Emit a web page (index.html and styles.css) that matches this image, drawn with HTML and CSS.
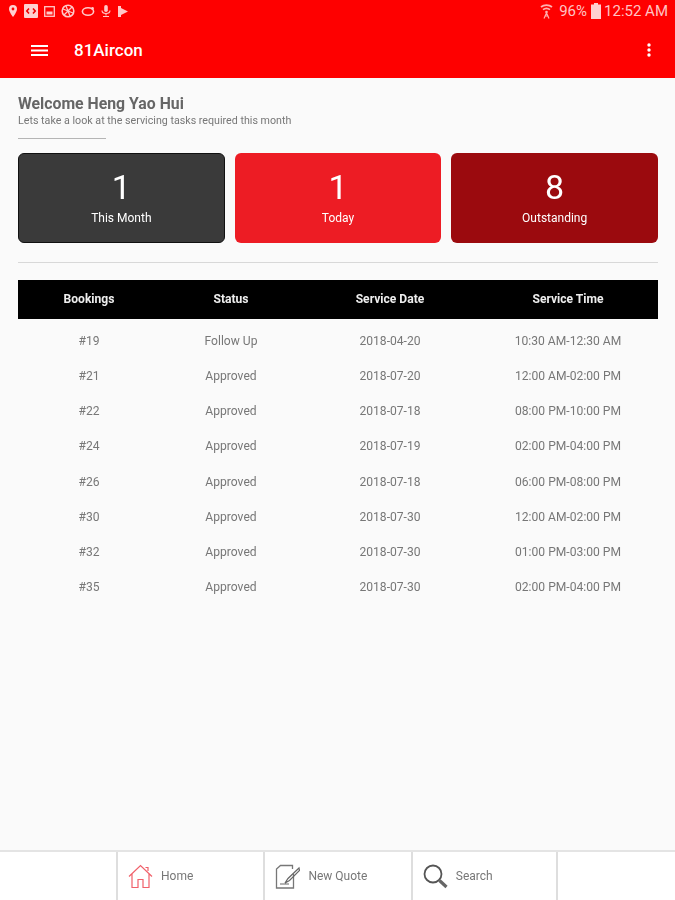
FILE: index.html
```html
<!DOCTYPE html>
<html lang="en">
<head>
<meta charset="utf-8">
<title>81Aircon</title>
<link rel="stylesheet" href="styles.css">
</head>
<body>
<div class="page">
  <header class="appbar">
    <div class="statusbar">
      <div class="status-icons">
        <svg class="si" width="10" height="12" viewBox="0 0 10 12"><path fill="#ffd0d0" fill-rule="evenodd" d="M5 0a4 4 0 0 1 4 4c0 3-4 8-4 8S1 7 1 4a4 4 0 0 1 4-4zm0 2.600a1.400 1.400 0 1 0 0 2.800 1.400 1.400 0 0 0 0-2.800z"/></svg>
        <svg class="si" width="14" height="14" viewBox="0 0 14 14"><rect width="14" height="14" rx="1" fill="#ffd0d0"/><path d="M5 4.500 2.800 7 5 9.500M9 4.500 11.200 7 9 9.500" fill="none" stroke="#e00" stroke-width="1.600"/></svg>
        <svg class="si" width="11" height="11" viewBox="0 0 11 11"><rect x=".7" y=".7" width="9.600" height="9.600" fill="none" stroke="#ffc8c8" stroke-width="1.300"/><rect x="2.500" y="5.500" width="6" height="3" fill="#ffc8c8"/></svg>
        <svg class="si" width="14" height="14" viewBox="0 0 14 14"><circle cx="7" cy="7" r="5.800" fill="none" stroke="#ffc8c8" stroke-width="1.600"/><path d="M2 5l10 4M5 2l4 10M11 3 3 11" stroke="#ffc8c8" stroke-width="1.300"/></svg>
        <svg class="si" width="14" height="11" viewBox="0 0 14 11"><ellipse cx="7" cy="5.500" rx="5.600" ry="3.800" fill="none" stroke="#ffc8c8" stroke-width="1.600"/><circle cx="11.500" cy="2.500" r="1.400" fill="#ffc8c8"/></svg>
        <svg class="si" width="10" height="12" viewBox="0 0 10 12"><rect x="3.200" y="0" width="3.600" height="7" rx="1.800" fill="#ffc8c8"/><path d="M1 5.500c0 4 8 4 8 0M5 9v1.500M2 11.500h6" fill="none" stroke="#ffc8c8" stroke-width="1.100"/></svg>
        <svg class="si" width="11" height="11" viewBox="0 0 11 11"><path fill="#ffc8c8" d="M1 0h3v2l7 3.500-7 3.500v2H1z"/></svg>
      </div>
      <div class="status-right">
        <svg width="13" height="15" viewBox="0 0 13 15"><path d="M1 3c3-2.600 8-2.600 11 0M3 5.600c2-1.500 5-1.500 7 0" fill="none" stroke="#ffb0b0" stroke-width="1.700"/><circle cx="6.500" cy="8" r="1.300" fill="#ffb0b0"/><path d="M6.500 9 4 14.500M6.500 9 9 14.500M4.500 12h4" fill="none" stroke="#ffb0b0" stroke-width="1.200"/></svg>
        <span class="status-text pct">96%</span>
        <svg width="10" height="16" viewBox="0 0 10 16"><path fill="#ffd0d0" d="M3 0h4v1.500h3V16H0V1.500h3z"/></svg>
        <span class="status-text">12:52 AM</span>
      </div>
    </div>
    <div class="toolbar">
      <div class="toolbar-left">
        <svg class="menu-icon" width="17" height="11" viewBox="0 0 17 11"><path d="M0 1h17M0 5.500h17M0 10h17" stroke="#fff" stroke-width="2"/></svg>
        <span class="app-title">81Aircon</span>
      </div>
      <svg class="more-icon" width="4" height="14" viewBox="0 0 4 14"><circle cx="2" cy="2" r="1.700" fill="#fff"/><circle cx="2" cy="7" r="1.700" fill="#fff"/><circle cx="2" cy="12" r="1.700" fill="#fff"/></svg>
    </div>
  </header>

  <main class="content">
    <h1 class="welcome">Welcome Heng Yao Hui</h1>
    <p class="subtitle">Lets take a look at the servicing tasks required this month</p>
    <div class="short-rule"></div>

    <section class="cards">
      <div class="card card-dark"><div class="card-num">1</div><div class="card-label">This Month</div></div>
      <div class="card card-red"><div class="card-num">1</div><div class="card-label">Today</div></div>
      <div class="card card-maroon"><div class="card-num">8</div><div class="card-label">Outstanding</div></div>
    </section>

    <div class="long-rule"></div>

    <div class="table">
      <div class="row head"><div>Bookings</div><div>Status</div><div>Service Date</div><div>Service Time</div></div>
      <div class="row"><div>#19</div><div>Follow Up</div><div>2018-04-20</div><div>10:30 AM-12:30 AM</div></div>
      <div class="row"><div>#21</div><div>Approved</div><div>2018-07-20</div><div>12:00 AM-02:00 PM</div></div>
      <div class="row"><div>#22</div><div>Approved</div><div>2018-07-18</div><div>08:00 PM-10:00 PM</div></div>
      <div class="row"><div>#24</div><div>Approved</div><div>2018-07-19</div><div>02:00 PM-04:00 PM</div></div>
      <div class="row"><div>#26</div><div>Approved</div><div>2018-07-18</div><div>06:00 PM-08:00 PM</div></div>
      <div class="row"><div>#30</div><div>Approved</div><div>2018-07-30</div><div>12:00 AM-02:00 PM</div></div>
      <div class="row"><div>#32</div><div>Approved</div><div>2018-07-30</div><div>01:00 PM-03:00 PM</div></div>
      <div class="row"><div>#35</div><div>Approved</div><div>2018-07-30</div><div>02:00 PM-04:00 PM</div></div>
    </div>
  </main>

  <nav class="tabbar">
    <div class="tab">
      <svg width="25" height="25" viewBox="0 0 25 25"><path d="M1 12.500 12.500 1.500 24 12.500M4 10v13.500h6V15.500h5v8h6V10M17.500 3.500h2.500V7" fill="none" stroke="#f0606a" stroke-width="1.200"/></svg>
      <span>Home</span>
    </div>
    <div class="tab">
      <svg width="25" height="25" viewBox="0 0 25 25"><path d="M18.500 10v14H1.500V5l4-3.500h12V5" fill="none" stroke="#777" stroke-width="1.300"/><path d="M24 4 13 14.500l-3 4.500 4.500-2.500L24.500 6.500zM5 20h9" fill="none" stroke="#666" stroke-width="1.200"/></svg>
      <span>New Quote</span>
    </div>
    <div class="tab">
      <svg width="25" height="25" viewBox="0 0 25 25"><circle cx="10" cy="10" r="8.500" fill="none" stroke="#555" stroke-width="1.800"/><path d="m16.500 16.500 7 6.500" stroke="#666" stroke-width="3.200"/></svg>
      <span>Search</span>
    </div>
  </nav>
</div>
</body>
</html>
```
FILE: styles.css
```css
* { box-sizing: border-box; }
html, body { margin: 0; padding: 0; }
body { font-family: Roboto, "Liberation Sans", sans-serif; background: #fafafa; }
.page { width: 675px; height: 900px; display: flex; flex-direction: column; overflow: hidden; filter: blur(0.4px); }

.appbar { height: 78px; background: #fe0000; flex: none; }
.statusbar { height: 22px; display: flex; justify-content: space-between; align-items: center; padding: 0 7px 0 8px; }
.status-icons { display: flex; align-items: center; gap: 6px; }
.status-right { display: flex; align-items: center; gap: 3px; }
.status-text { font-size: 15px; color: #ffc4c4; line-height: 22px; }
.pct { margin-left: 3px; margin-right: 1px; }
.toolbar { height: 56px; display: flex; align-items: center; justify-content: space-between; padding: 0 24px 0 31px; }
.toolbar-left { display: flex; align-items: center; gap: 26px; }
.app-title { font-size: 17px; font-weight: 500; color: #fff; }

.content { flex: 1; padding: 17px 17px 0 18px; }
.welcome { margin: 0; font-size: 15.800px; line-height: 18px; font-weight: 700; color: #666; }
.subtitle { margin: 0.500px 0 0; font-size: 10.700px; line-height: 14px; color: #777; }
.short-rule { width: 88px; height: 1px; background: #b5b5b5; margin-top: 10px; }

.cards { display: grid; grid-template-columns: repeat(3, 1fr); gap: 10px; margin-top: 14px; }
.card { height: 90px; border-radius: 6px; color: #fff; display: flex; flex-direction: column; align-items: center; }
.card-dark { background: #3a3a3a; border: 1px solid #111; }
.card-red { background: #ed1c24; }
.card-maroon { background: #9b0a0e; }
.card-num { font-size: 34px; line-height: 40px; margin-top: 14px; }
.card-label { font-size: 12px; line-height: 16px; margin-top: 3px; }
.card-dark .card-num { margin-top: 13px; }

.long-rule { height: 1px; background: #d8d8d8; margin-top: 19px; }

.table { margin-top: 17px; }
.row { display: grid; grid-template-columns: 142px 142px 176px 180px; height: 35.150px; align-items: center; text-align: center; font-size: 12.100px; color: #777; }
.head { height: 39px; background: #000; color: #eee; font-weight: 700; margin-bottom: 5px; }

.tabbar { height: 50px; flex: none; display: flex; padding-left: 116px; background: #fff; border-top: 2px solid #e4e4e4; }
.tab { width: 147.400px; display: flex; align-items: center; gap: 8px; padding: 0 0 0 10px; border-left: 2px solid #dedede; font-size: 12px; color: #777; }
.tab:last-child { border-right: 2px solid #dedede; }
.tab span { margin-top: -1px; }
```
